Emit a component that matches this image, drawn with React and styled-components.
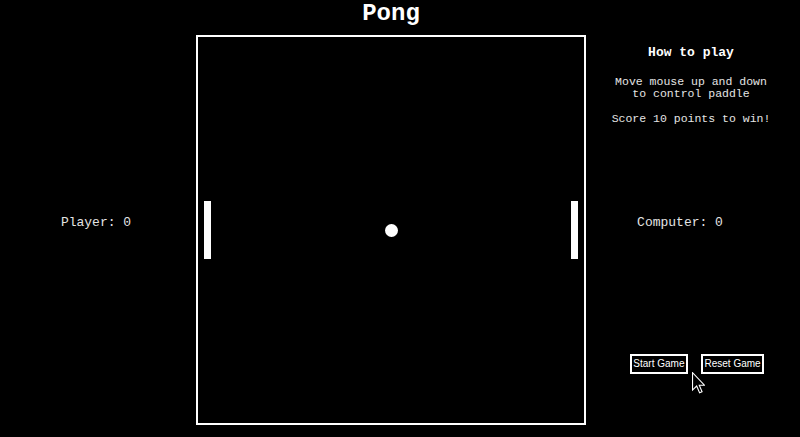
import React from "react";
import styled, { createGlobalStyle } from "styled-components";

const GlobalStyle = createGlobalStyle`
  body {
    margin: 0;
    background: #000;
    color: #fff;
    font-family: "Courier New", "Liberation Mono", monospace;
  }
`;

const App = () => {
  return (
    <>
      <GlobalStyle />
      <Page>
        <SideColumn>
          <Score>Player: 0</Score>
        </SideColumn>

        <CenterColumn>
          <Title>Pong</Title>
          <Board>
            <Paddle side="left" />
            <Ball />
            <Paddle side="right" />
          </Board>
        </CenterColumn>

        <RightColumn>
          <HowTo>How to play</HowTo>
          <Instructions>
            Move mouse up and down
            <br />
            to control paddle
          </Instructions>
          <Instructions gap={13}>Score 10 points to win!</Instructions>
          <ComputerScore>Computer: 0</ComputerScore>
          <ButtonRow>
            <GameButton>Start Game</GameButton>
            <GameButton>Reset Game</GameButton>
          </ButtonRow>
        </RightColumn>

        <Cursor width="13" height="22" viewBox="0 0 12 20">
          <path
            d="M0.5 0.5 L0.5 16.5 L4.3 12.8 L7 19 L9.3 18 L6.7 12 L11.5 12 Z"
            fill="#000"
            stroke="#fff"
            strokeWidth="1"
            strokeLinejoin="miter"
          />
        </Cursor>
      </Page>
    </>
  );
};

const Page = styled.div`
  position: relative;
  display: flex;
  width: 800px;
  height: 437px;
  overflow: hidden;
`;

const SideColumn = styled.div`
  width: 196px;
  display: flex;
  align-items: center;
  justify-content: center;
  padding-top: 8px;
  padding-right: 4px;
  box-sizing: border-box;
`;

const Score = styled.div`
  font-size: 13px;
  line-height: 15px;
  color: #e4e4e4;
`;

const CenterColumn = styled.div`
  width: 390px;
  display: flex;
  flex-direction: column;
  align-items: center;
`;

const Title = styled.h1`
  margin: 0 0 8px;
  font-size: 24px;
  line-height: 27px;
  font-weight: bold;
`;

const Board = styled.div`
  position: relative;
  width: 386px;
  height: 386px;
  border: 2px solid #fff;
`;

const Paddle = styled.div`
  position: absolute;
  top: 164px;
  ${(props) => (props.side === "left" ? "left: 6px;" : "right: 6px;")}
  width: 7px;
  height: 58px;
  background: #fff;
`;

const Ball = styled.div`
  position: absolute;
  left: 186.5px;
  top: 186.5px;
  width: 13px;
  height: 13px;
  border-radius: 50%;
  background: #fff;
`;

const RightColumn = styled.div`
  width: 214px;
  display: flex;
  flex-direction: column;
  align-items: center;
  padding-right: 4px;
  box-sizing: border-box;
`;

const HowTo = styled.h2`
  margin: 45px 0 0;
  font-size: 13px;
  line-height: 15px;
  font-weight: bold;
`;

const Instructions = styled.p`
  margin: ${(props) => props.gap || 15.5}px 0 0;
  font-size: 11.5px;
  line-height: 12px;
  text-align: center;
  color: #e4e4e4;
`;

const ComputerScore = styled.div`
  margin: 90.5px 22px 0 0;
  font-size: 13px;
  line-height: 15px;
  color: #e4e4e4;
`;

const ButtonRow = styled.div`
  display: flex;
  gap: 13px;
  margin: 124px 0 0 12px;
`;

const GameButton = styled.button`
  background: #000;
  color: #fff;
  border: 2px solid #fff;
  border-radius: 0;
  padding: 2px 1.5px;
  font-family: "Liberation Sans", Arial, sans-serif;
  font-size: 10px;
  line-height: 12px;
  cursor: pointer;
`;

const Cursor = styled.svg`
  position: absolute;
  left: 692px;
  top: 372px;
`;

export default App;
